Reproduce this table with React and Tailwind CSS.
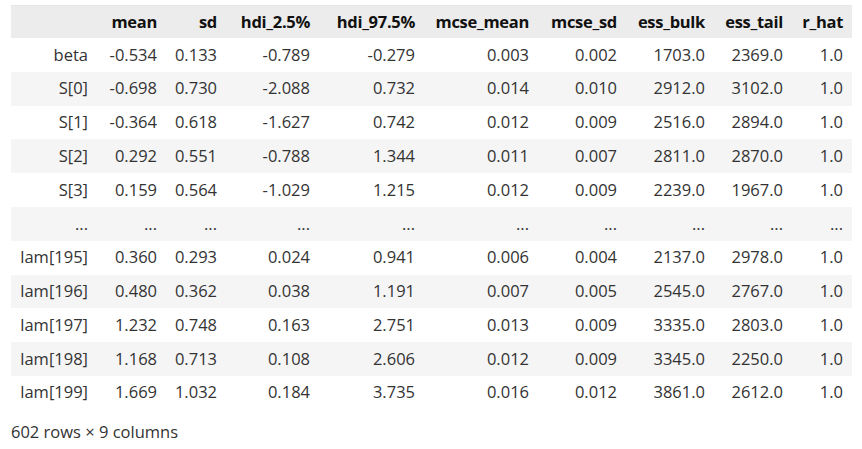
import React from "react"

const cols = [
  { key: "mean", w: "w-[69px]" },
  { key: "sd", w: "w-[60px]" },
  { key: "hdi_2.5%", w: "w-[93px]" },
  { key: "hdi_97.5%", w: "w-[105px]" },
  { key: "mcse_mean", w: "w-[114px]" },
  { key: "mcse_sd", w: "w-[88px]" },
  { key: "ess_bulk", w: "w-[88px]" },
  { key: "ess_tail", w: "w-[78px]" },
  { key: "r_hat", w: "w-[62px]", pr: "pr-[9px]" },
]

const rows = [
  ["beta", "-0.534", "0.133", "-0.789", "-0.279", "0.003", "0.002", "1703.0", "2369.0", "1.0"],
  ["S[0]", "-0.698", "0.730", "-2.088", "0.732", "0.014", "0.010", "2912.0", "3102.0", "1.0"],
  ["S[1]", "-0.364", "0.618", "-1.627", "0.742", "0.012", "0.009", "2516.0", "2894.0", "1.0"],
  ["S[2]", "0.292", "0.551", "-0.788", "1.344", "0.011", "0.007", "2811.0", "2870.0", "1.0"],
  ["S[3]", "0.159", "0.564", "-1.029", "1.215", "0.012", "0.009", "2239.0", "1967.0", "1.0"],
  ["...", "...", "...", "...", "...", "...", "...", "...", "...", "..."],
  ["lam[195]", "0.360", "0.293", "0.024", "0.941", "0.006", "0.004", "2137.0", "2978.0", "1.0"],
  ["lam[196]", "0.480", "0.362", "0.038", "1.191", "0.007", "0.005", "2545.0", "2767.0", "1.0"],
  ["lam[197]", "1.232", "0.748", "0.163", "2.751", "0.013", "0.009", "3335.0", "2803.0", "1.0"],
  ["lam[198]", "1.168", "0.713", "0.108", "2.606", "0.012", "0.009", "3345.0", "2250.0", "1.0"],
  ["lam[199]", "1.669", "1.032", "0.184", "3.735", "0.016", "0.012", "3861.0", "2612.0", "1.0"],
]

const Cell = ({ w, pr = "pr-[7px]", children }) => (
  <div className={`${w} ${pr} shrink-0 text-right whitespace-nowrap`}>{children}</div>
)

export default function App() {
  return (
    <div
      className="w-[862px] h-[449px] bg-white pt-[5px] pl-[11px] text-[16.5px] text-[#333]"
      style={{ fontFamily: '"Open Sans", "Noto Sans", sans-serif' }}
    >
      <div className="w-[841px]">
        <div className="flex items-center h-[33px] bg-[#ececec] font-bold text-[#111] tracking-[-0.3px] border-t border-dotted border-[#e2e2e2]">
          <Cell w="w-[84px]" />
          {cols.map((c) => (
            <Cell key={c.key} w={c.w} pr={c.pr}>{c.key}</Cell>
          ))}
        </div>
        {rows.map((r, i) => (
          <div
            key={i}
            className={`flex items-center h-[33.8px] ${i % 2 === 1 ? "bg-[#f5f5f5]" : "bg-white"}`}
          >
            <Cell w="w-[84px]">{r[0]}</Cell>
            {cols.map((c, j) => (
              <Cell key={c.key} w={c.w} pr={c.pr}>{r[j + 1]}</Cell>
            ))}
          </div>
        ))}
      </div>
      <div className="mt-[10px] leading-[24px]">602 rows × 9 columns</div>
    </div>
  )
}
